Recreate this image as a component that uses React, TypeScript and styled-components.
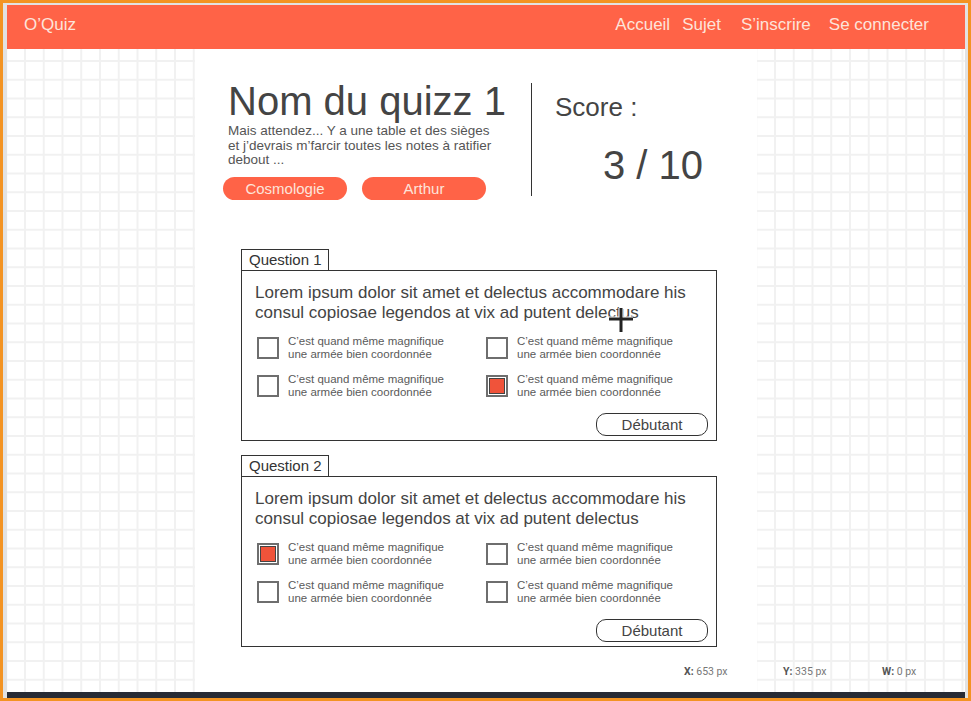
import React from 'react';
import styled, { createGlobalStyle } from 'styled-components';

const tomato = '#ff6347';
const paleText = '#fde4da';
const ink = '#444';
const soft = '#5a5a5a';

const GlobalStyle = createGlobalStyle`
  html, body {
    margin: 0;
    padding: 0;
    background: #f39322;
  }
  * {
    box-sizing: border-box;
  }
`;

const Frame = styled.div`
  position: relative;
  width: 971px;
  height: 701px;
  border: 3px solid #f39322;
  background-color: #e2e2e2;
  padding: 2px 3px 0 4px;
  display: flex;
  flex-direction: column;
  font-family: "Liberation Sans", Arial, sans-serif;
  overflow: hidden;
`;

const Header = styled.header`
  height: 44px;
  flex: none;
  background-color: ${tomato};
  color: ${paleText};
  display: flex;
  align-items: center;
  padding: 0 36px 5px 17px;
  font-size: 17px;
`;

const Brand = styled.div`
  cursor: pointer;
`;

const Nav = styled.nav`
  margin-left: auto;
  display: flex;
  align-items: center;
`;

const NavLink = styled.a<{ $space: number }>`
  margin-left: ${(p) => p.$space}px;
  cursor: pointer;
`;

const Board = styled.main`
  flex: 1;
  display: flex;
  background-color: #fff;
  background-image: linear-gradient(to right, #f1f1f1 2px, transparent 2px),
    linear-gradient(to bottom, #f1f1f1 2px, transparent 2px);
  background-size: 18.75px 18.75px;
  background-position: 17px 11px;
`;

const Sheet = styled.section`
  margin-left: 188px;
  width: 562px;
  background-color: #fff;
  padding: 32px 0 0 0;
`;

const Intro = styled.div`
  display: flex;
  align-items: flex-start;
  padding-left: 28px;
`;

const QuizInfo = styled.div`
  width: 290px;
  display: flex;
  flex-direction: column;
`;

const Title = styled.h1`
  margin: 0 0 0 5px;
  font-size: 40px;
  line-height: 40px;
  font-weight: 400;
  color: ${ink};
  white-space: nowrap;
`;

const Description = styled.p`
  margin: 3px 0 0 5px;
  width: 272px;
  font-size: 13.5px;
  line-height: 14.5px;
  color: #555;
`;

const Tags = styled.div`
  display: flex;
  gap: 15px;
  margin-top: 9px;
`;

const Tag = styled.span`
  width: 124px;
  height: 23px;
  border-radius: 12px;
  background-color: ${tomato};
  color: ${paleText};
  font-size: 15px;
  display: flex;
  align-items: center;
  justify-content: center;
`;

const Divider = styled.div`
  width: 1px;
  height: 113px;
  margin: 2px 0 0 18px;
  background-color: #333;
`;

const ScoreBox = styled.div`
  margin: 11px 0 0 23px;
  color: ${ink};
`;

const ScoreLabel = styled.div`
  font-size: 26px;
  line-height: 30px;
`;

const ScoreValue = styled.div`
  margin: 23px 0 0 48px;
  font-size: 40px;
  line-height: 40px;
`;

const QuestionList = styled.div`
  margin: 49px 0 0 46px;
  display: flex;
  flex-direction: column;
  gap: 14px;
`;

const QuestionBlock = styled.article`
  display: flex;
  flex-direction: column;
  width: 476px;
`;

const Tab = styled.div`
  width: 88px;
  height: 21px;
  border: 1px solid #333;
  border-bottom: 0;
  padding-left: 7px;
  font-size: 15px;
  line-height: 20px;
  color: #333;
`;

const Card = styled.div`
  border: 1px solid #333;
  padding: 12px 8px 4px 13px;
  display: flex;
  flex-direction: column;
`;

const QuestionText = styled.p`
  margin: 0;
  width: 452px;
  font-size: 17px;
  line-height: 20px;
  color: ${ink};
`;

const Options = styled.div`
  margin-top: 12.5px;
  padding-left: 2px;
  display: grid;
  grid-template-columns: 229px 229px;
  row-gap: 13px;
`;

const Option = styled.label`
  display: flex;
  align-items: center;
  gap: 9px;
  height: 25px;
`;

const Box = styled.span<{ $checked?: boolean }>`
  width: 22px;
  height: 22px;
  flex: none;
  border: 2px solid #6e6e6e;
  background-color: #fff;
  display: flex;
  align-items: center;
  justify-content: center;

  &::after {
    content: '';
    display: ${(p) => (p.$checked ? 'block' : 'none')};
    width: 14px;
    height: 14px;
    background-color: #f0533a;
    border: 1px solid #444;
  }
`;

const OptionText = styled.span`
  width: 168px;
  font-size: 11.5px;
  line-height: 12.5px;
  color: ${soft};
`;

const CardFooter = styled.div`
  display: flex;
  justify-content: flex-end;
  margin-top: 14.5px;
`;

const LevelButton = styled.button`
  width: 112px;
  height: 23px;
  border: 1px solid #333;
  border-radius: 10px;
  background: #fff;
  font-family: inherit;
  font-size: 15px;
  color: ${ink};
  padding: 0;
  cursor: pointer;
`;

const BottomBar = styled.div`
  height: 6px;
  flex: none;
  background-color: #272b35;
`;

const Readout = styled.div`
  position: absolute;
  left: 681px;
  top: 662px;
  display: flex;
  font-family: Roboto, "Liberation Sans", sans-serif;
  font-size: 10.5px;
  color: #777;
`;

const ReadoutItem = styled.span`
  width: 99px;

  b {
    color: #555;
    font-weight: 700;
  }
`;

const Cursor = styled.svg`
  position: absolute;
  left: 603px;
  top: 302px;
  pointer-events: none;
`;

const questions = [
  { id: 1, checked: [3] },
  { id: 2, checked: [0] },
];

const optionLabel = 'C\u2019est quand même magnifique une armée bien coordonnée';

export default function App() {
  return (
    <>
      <GlobalStyle />
      <Frame>
        <Header>
          <Brand>O’Quiz</Brand>
          <Nav>
            <NavLink $space={0}>Accueil</NavLink>
            <NavLink $space={12}>Sujet</NavLink>
            <NavLink $space={20}>S’inscrire</NavLink>
            <NavLink $space={18}>Se connecter</NavLink>
          </Nav>
        </Header>
        <Board>
          <Sheet>
            <Intro>
              <QuizInfo>
                <Title>Nom du quizz 1</Title>
                <Description>
                  Mais attendez... Y a une table et des sièges et j’devrais m’farcir toutes les notes à ratifier debout ...
                </Description>
                <Tags>
                  <Tag>Cosmologie</Tag>
                  <Tag>Arthur</Tag>
                </Tags>
              </QuizInfo>
              <Divider />
              <ScoreBox>
                <ScoreLabel>Score :</ScoreLabel>
                <ScoreValue>3 / 10</ScoreValue>
              </ScoreBox>
            </Intro>
            <QuestionList>
              {questions.map((q) => (
                <QuestionBlock key={q.id}>
                  <Tab>Question {q.id}</Tab>
                  <Card>
                    <QuestionText>
                      Lorem ipsum dolor sit amet et delectus accommodare his consul copiosae legendos at vix ad putent delectus
                    </QuestionText>
                    <Options>
                      {[0, 1, 2, 3].map((i) => (
                        <Option key={i}>
                          <Box $checked={q.checked.includes(i)} />
                          <OptionText>{optionLabel}</OptionText>
                        </Option>
                      ))}
                    </Options>
                    <CardFooter>
                      <LevelButton>Débutant</LevelButton>
                    </CardFooter>
                  </Card>
                </QuestionBlock>
              ))}
            </QuestionList>
          </Sheet>
        </Board>
        <BottomBar />
        <Readout>
          <ReadoutItem><b>X:</b> 653 px</ReadoutItem>
          <ReadoutItem><b>Y:</b> 335 px</ReadoutItem>
          <ReadoutItem><b>W:</b> 0 px</ReadoutItem>
        </Readout>
        <Cursor width="30" height="30" viewBox="0 0 30 30">
          <path d="M15 3v24M3 14h24" stroke="#fff" strokeWidth="5" />
          <path d="M15 3v24M3 14h24" stroke="#222" strokeWidth="3" />
        </Cursor>
      </Frame>
    </>
  );
}
